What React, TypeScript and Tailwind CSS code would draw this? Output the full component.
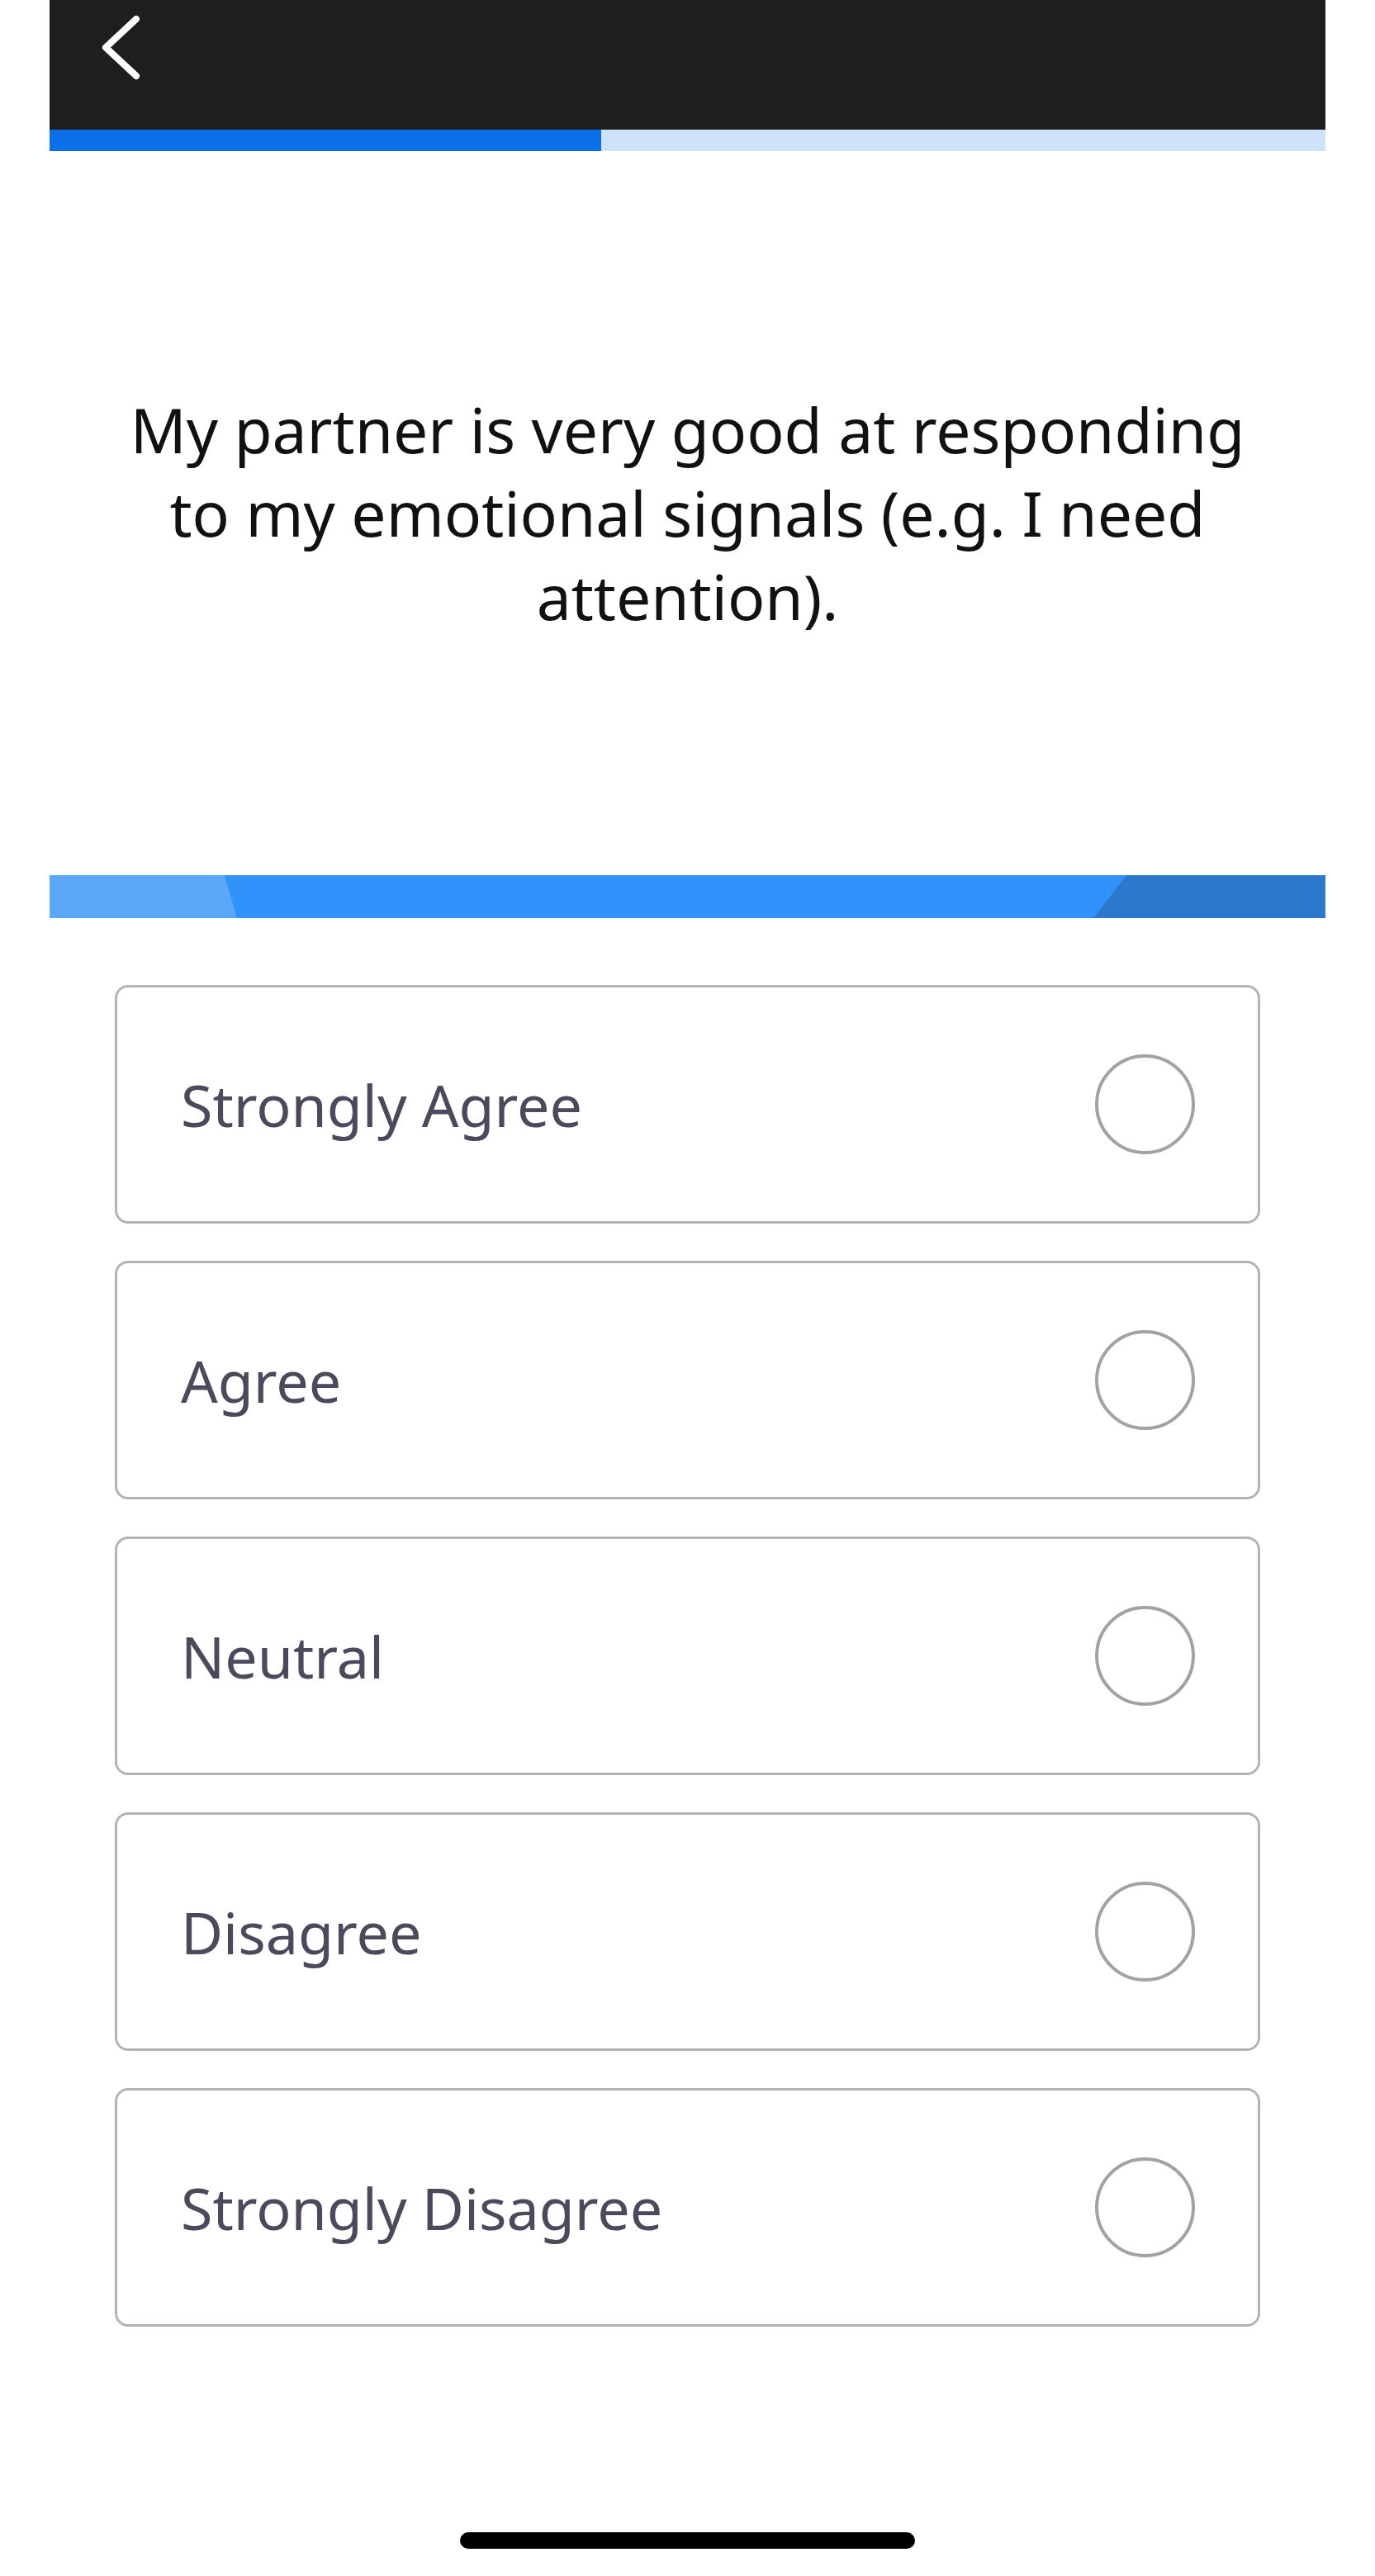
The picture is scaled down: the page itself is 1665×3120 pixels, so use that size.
import React from "react";

const OPTIONS = ["Strongly Agree", "Agree", "Neutral", "Disagree", "Strongly Disagree"];

function BackChevron() {
  return (
    <svg width="50" height="88" viewBox="0 0 50 88" fill="none">
      <path d="M43 9 L6 43.5 L43 78" stroke="#ffffff" strokeWidth="8" strokeLinecap="round" strokeLinejoin="round" />
    </svg>
  );
}

function OptionCard({ label }: { label: string }) {
  return (
    <button
      type="button"
      className="flex h-[289px] w-full items-center justify-between rounded-[16px] border-[3px] border-[#b3b3b3] bg-white pl-[77px] pr-[76px] text-left"
    >
      <span className="text-[70px] leading-none text-[#4a4a5c] [font-family:'Noto_Sans',sans-serif]">
        {label}
      </span>
      <span className="block h-[121px] w-[121px] rounded-full border-[4px] border-[#a2a2a2]" />
    </button>
  );
}

export default function App() {
  return (
    <div className="min-h-[3120px] w-[1665px] bg-white [font-family:'Noto_Sans',sans-serif]">
      <div className="mx-[60px] flex flex-col">
        <header className="flex h-[157px] items-start bg-[#1e1e1e] pl-[62px] pt-[14px]">
          <BackChevron />
        </header>

        <div className="flex h-[26px]">
          <div className="w-[668px] bg-[#0b6fe7]" />
          <div className="flex-1 bg-[#cfe2fb]" />
        </div>

        <section className="flex h-[877px] items-center justify-center px-[40px]">
          <h1 className="text-center text-[75px] font-normal leading-[101px] text-[#111111]">
            My partner is very good at responding
            <br />
            to my emotional signals (e.g. I need
            <br />
            attention).
          </h1>
        </section>

        <div className="relative h-[52px] bg-[#3292fb]">
          <svg className="absolute inset-0 h-full w-full" viewBox="0 0 1546 52" preserveAspectRatio="none">
            <polygon points="0,0 212,0 227,52 0,52" fill="#5ca8f8" />
            <polygon points="1305,0 1546,0 1546,52 1265,52" fill="#2b78cd" />
          </svg>
        </div>

        <div className="flex flex-col gap-[45px] px-[79px] pt-[81px]">
          {OPTIONS.map((o) => (
            <OptionCard key={o} label={o} />
          ))}
        </div>
      </div>

      <div className="flex justify-center pt-[249px]">
        <div className="h-[20px] w-[551px] rounded-full bg-black" />
      </div>
    </div>
  );
}
